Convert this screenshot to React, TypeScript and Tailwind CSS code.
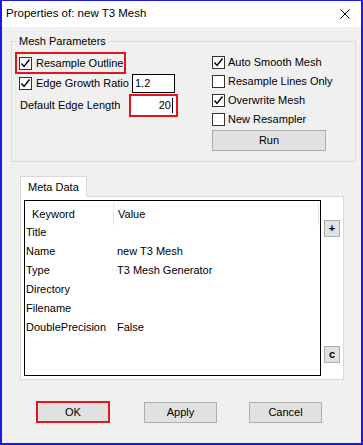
import React from 'react';

const font = "font-['Liberation_Sans',Arial,sans-serif]";
const redBox = 'border-2 border-[#e3141b]';
const btn = 'flex items-center justify-center bg-[#e1e1e1] border border-[#adadad] text-[11px] text-black';

type CheckProps = {
  readonly checked?: boolean;
};

const CheckBox: React.FunctionComponent<CheckProps> = ({ checked }) => (
  <span className="flex h-[13px] w-[13px] shrink-0 items-center justify-center border border-[#333333] bg-white">
    {checked && (
      <svg width="11" height="11" viewBox="0 0 11 11">
        <polyline points="1.5,5.5 4,8.5 9.5,1.5" fill="none" stroke="#000" strokeWidth="1.4" />
      </svg>
    )}
  </span>
);

type RightOptionProps = {
  readonly label: string;
  readonly checked?: boolean;
};

const RightOption: React.FunctionComponent<RightOptionProps> = ({ label, checked }) => (
  <div className="flex h-[19px] items-center gap-[3px] whitespace-nowrap">
    <CheckBox checked={checked} />
    <span>{label}</span>
  </div>
);

const metaRows = [
  { key: 'Title', value: '' },
  { key: 'Name', value: 'new T3 Mesh' },
  { key: 'Type', value: 'T3 Mesh Generator' },
  { key: 'Directory', value: '' },
  { key: 'Filename', value: '' },
  { key: 'DoublePrecision', value: 'False' },
];

export default function App() {
  return (
    <div
      className={`${font} flex h-[445px] w-[363px] flex-col border-x-2 border-t border-b-2 border-[#1a1ae0] bg-[#f0f0f0] text-[11px] text-black`}
    >
      {/* title bar */}
      <div className="flex h-[26px] shrink-0 items-center justify-between bg-white pl-[4px] pr-[11px]">
        <span className="text-[11.5px]">Properties of: new T3 Mesh</span>
        <svg width="10" height="10" viewBox="0 0 10 10">
          <path d="M0.5 0.5 L9.5 9.5 M9.5 0.5 L0.5 9.5" stroke="#000" strokeWidth="1" />
        </svg>
      </div>

      {/* mesh parameters */}
      <fieldset className="ml-[9px] mt-[7px] w-[345px] border border-[#dcdcdc]">
        <legend className="ml-[5px] px-[2px] leading-[14px]">Mesh Parameters</legend>
        <div className="flex pb-[10px] pl-[3px]">
          <div className="flex w-[197px] flex-col pt-[4px]">
            <div className={`flex h-[22px] w-[111px] items-center gap-[4px] pl-[2px] ${redBox}`}>
              <CheckBox checked />
              <span>Resample Outline</span>
            </div>
            <div className="flex h-[19px] items-center">
              <div className="flex w-[117px] items-center gap-[4px] pl-[4px] whitespace-nowrap">
                <CheckBox checked />
                <span>Edge Growth Ratio</span>
              </div>
              <div className="flex h-[19px] w-[43px] items-center border border-black bg-white pl-[2px]">1.2</div>
            </div>
            <div className="mt-[1px] flex h-[23px] items-center">
              <span className="w-[114px] pl-[5px] whitespace-nowrap">Default Edge Length</span>
              <div className={`flex h-[23px] w-[49px] items-center justify-end bg-white pr-[3px] ${redBox}`}>
                <span>20</span>
                <span className="ml-[1px] h-[15px] w-[1px] bg-black" />
              </div>
            </div>
          </div>
          <div className="flex w-[114px] flex-col pt-[5px]">
            <RightOption label="Auto Smooth Mesh" checked />
            <RightOption label="Resample Lines Only" />
            <RightOption label="Overwrite Mesh" checked />
            <RightOption label="New Resampler" />
            <button className={`${btn} mt-[1px] h-[21px] w-[114px]`}>Run</button>
          </div>
        </div>
      </fieldset>

      {/* meta data tab */}
      <div className="ml-[18px] mt-[14px] flex w-[324px] flex-col">
        <div className="relative z-10 -mb-px flex h-[21px] w-[67px] items-center border-x border-t border-[#d9d9d9] bg-white pl-[7px]">
          Meta Data
        </div>
        <div className="flex h-[184px] border border-[#d9d9d9] bg-white p-[3px]">
          <div className="flex h-[176px] w-[298px] flex-col border border-black">
            <div className="flex h-[24px] shrink-0">
              <div className="mt-[2px] flex h-[22px] w-[89px] items-center border-r border-[#e5e5e5] pl-[7px]">
                Keyword
              </div>
              <div className="mt-[2px] flex h-[22px] w-[205px] items-center border-r border-[#e5e5e5] pl-[4px]">
                Value
              </div>
            </div>
            {metaRows.map((row) => (
              <div key={row.key} className="flex h-[19px] leading-[15px]">
                <span className="w-[92px] pl-[1px]">{row.key}</span>
                <span>{row.value}</span>
              </div>
            ))}
          </div>
          <div className="ml-[3px] flex flex-col">
            <button className={`${btn} mt-[20px] h-[17px] w-[16px] font-bold text-[#10107a]`}>+</button>
            <div className="flex-1" />
            <button className={`${btn} mb-[13px] h-[17px] w-[16px] font-bold`}>c</button>
          </div>
        </div>
      </div>

      {/* dialog buttons */}
      <div className="ml-[34px] mt-[21px] flex items-center">
        <button className={`flex h-[22px] w-[74px] items-center justify-center bg-[#e1e1e1] ${redBox}`}>OK</button>
        <button className={`${btn} ml-[34px] h-[21px] w-[73px]`}>Apply</button>
        <button className={`${btn} ml-[32px] h-[21px] w-[73px]`}>Cancel</button>
      </div>
    </div>
  );
}
